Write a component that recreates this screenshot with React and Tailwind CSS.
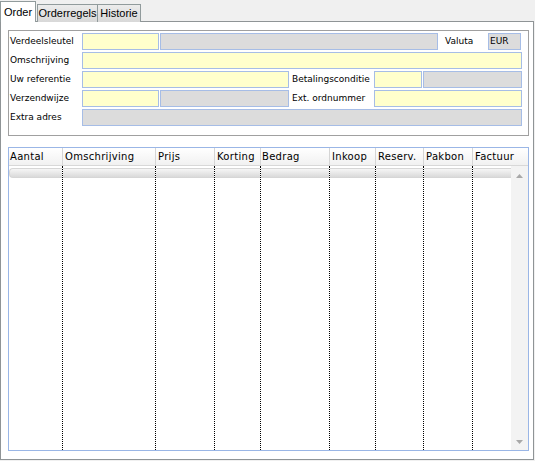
const Field = ({ gray, className = '' }) => (
  <div
    className={`h-[17px] border border-[#a6bde6] ${gray ? 'bg-[#dcdcdc]' : 'bg-[#ffffcc]'} ${className}`}
  />
)

const Label = ({ children, className = '' }) => (
  <div className={`h-[17px] flex items-center text-[9px] text-black ${className}`}>{children}</div>
)

const COLS = [
  { name: 'Aantal', w: 'w-[54px]', pl: 'pl-[1px]' },
  { name: 'Omschrijving', w: 'w-[93px]', pl: 'pl-[2px]' },
  { name: 'Prijs', w: 'w-[59px]', pl: 'pl-[2px]' },
  { name: 'Korting', w: 'w-[46px]', pl: 'pl-[2px]' },
  { name: 'Bedrag', w: 'w-[69px]', pl: 'pl-[1px]' },
  { name: 'Inkoop', w: 'w-[46px]', pl: 'pl-[2px]' },
  { name: 'Reserv.', w: 'w-[48px]', pl: 'pl-[2px]' },
  { name: 'Pakbon', w: 'w-[49px]', pl: 'pl-[2px]' },
  { name: 'Factuur', w: 'flex-1', pl: 'pl-[2px]' },
]

export default function App() {
  return (
    <div className="w-[535px] h-[461px] bg-[#f0f0f0] overflow-hidden font-['Liberation_Sans',sans-serif]">
      {/* Tabs */}
      <div className="h-[22px] flex items-end text-[11px] text-black">
        <div className="relative z-10 w-[36px] h-[21px] bg-white border border-b-0 border-[#919b9c] flex items-center justify-center">
          Order
        </div>
        <div className="w-[61px] h-[18px] ml-[1px] bg-linear-to-b from-[#ececec] to-[#d8d8d8] border border-b-0 border-[#919b9c] flex items-center justify-center">
          Orderregels
        </div>
        <div className="w-[43px] h-[18px] bg-linear-to-b from-[#ececec] to-[#d8d8d8] border border-b-0 border-l-0 border-[#919b9c] flex items-center justify-center">
          Historie
        </div>
      </div>

      {/* Panel */}
      <div className="-mt-px w-[534px] h-[439px] bg-white border border-[#8f9496] font-['DejaVu_Sans',sans-serif]">
        {/* Header group */}
        <div className="ml-[7px] mt-[8px] w-[521px] h-[106px] border border-[#a0a0a0] pt-[2px] pb-[9px] pr-[6px] flex flex-col gap-[2px]">
          <div className="flex">
            <Label className="w-[73px] pl-[1px]">Verdeelsleutel</Label>
            <Field className="w-[77px]" />
            <Field gray className="w-[278px] ml-[1px]" />
            <Label className="w-[43px] ml-[7px]">Valuta</Label>
            <div className="w-[33px] h-[17px] border border-[#a6bde6] bg-[#dcdcdc] text-[9px] flex items-center pl-[1px]">EUR</div>
          </div>
          <div className="flex">
            <Label className="w-[73px] pl-[1px]">Omschrijving</Label>
            <Field className="flex-1" />
          </div>
          <div className="flex">
            <Label className="w-[73px] pl-[1px]">Uw referentie</Label>
            <Field className="w-[207px]" />
            <Label className="w-[85px] pl-[3px]">Betalingsconditie</Label>
            <Field className="w-[48px]" />
            <Field gray className="flex-1 ml-[1px]" />
          </div>
          <div className="flex">
            <Label className="w-[73px] pl-[1px]">Verzendwijze</Label>
            <Field className="w-[77px]" />
            <Field gray className="w-[129px] ml-[1px]" />
            <Label className="w-[85px] pl-[3px]">Ext. ordnummer</Label>
            <Field className="flex-1" />
          </div>
          <div className="flex">
            <Label className="w-[73px] pl-[1px]">Extra adres</Label>
            <Field gray className="flex-1" />
          </div>
        </div>

        {/* Grid */}
        <div className="ml-[7px] mt-[11px] w-[521px] h-[304px] border border-[#9ab6e6] flex flex-col">
          <div className="h-[18px] flex border-b border-[#d8d8d8] bg-linear-to-b from-white to-[#f1f1f1] text-[10px] tracking-[0.3px] text-black">
            {COLS.map((c, i) => (
              <div
                key={c.name}
                className={`${c.w} ${c.pl} flex items-center overflow-hidden whitespace-nowrap ${i < COLS.length - 1 ? 'border-r border-[#d5d5d5]' : ''}`}
              >
                {c.name}
              </div>
            ))}
          </div>
          <div className="flex-1 flex">
            <div className="flex-1 flex">
              {COLS.map((c, i) => (
                <div
                  key={c.name}
                  className={`${c.w} pt-[2px] ${i < COLS.length - 1 ? 'border-r border-dotted border-black' : ''}`}
                >
                  <div
                    className={`h-[10px] bg-linear-to-b from-[#f6f6f6] to-[#dadada] border-y border-[#d6d6d6] ${i === 0 ? 'rounded-l-[4px] border-l' : ''}`}
                  />
                </div>
              ))}
            </div>
            <div className="w-[17px] bg-[#f3f3f3] flex flex-col justify-between items-center pt-[8px] pb-[6px]">
              <svg width="7" height="4" viewBox="0 0 7 4">
                <path d="M3.5 0 L7 4 L0 4 Z" fill="#a8a8a8" />
              </svg>
              <svg width="7" height="4" viewBox="0 0 7 4">
                <path d="M0 0 L7 0 L3.5 4 Z" fill="#a8a8a8" />
              </svg>
            </div>
          </div>
        </div>
      </div>
    </div>
  )
}
